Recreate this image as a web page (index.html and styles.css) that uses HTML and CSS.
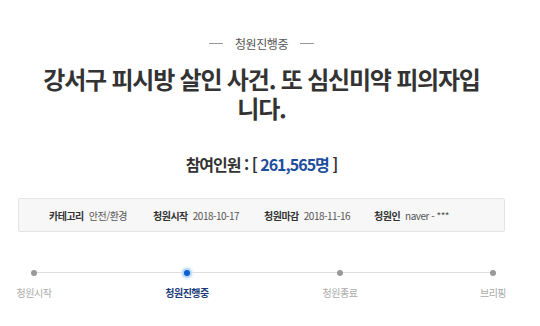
FILE: index.html
```html
<!DOCTYPE html>
<html lang="ko">
<head>
<meta charset="utf-8">
<link rel="stylesheet" href="styles.css">
</head>
<body>
<div class="page">
  <div class="status"><span class="rule"></span><span class="status-text">청원진행중</span><span class="rule"></span></div>
  <h1 class="title">강서구 피시방 살인 사건. 또 심신미약 피의자입니다.</h1>
  <p class="count">참여인원 : [ <span class="num">261,565명</span> ]</p>
  <div class="info">
    <div class="item item-cat"><b>카테고리</b><span>안전/환경</span></div>
    <div class="item item-start"><b>청원시작</b><span>2018-10-17</span></div>
    <div class="item item-end"><b>청원마감</b><span>2018-11-16</span></div>
    <div class="item"><b>청원인</b><span>naver - ***</span></div>
  </div>
  <div class="track">
    <div class="step"><i class="dot"></i><span class="label">청원시작</span></div>
    <div class="step active"><i class="dot"></i><span class="label">청원진행중</span></div>
    <div class="step"><i class="dot"></i><span class="label">청원종료</span></div>
    <div class="step"><i class="dot"></i><span class="label">브리핑</span></div>
  </div>
</div>
</body>
</html>
```
FILE: styles.css
```css
* { box-sizing: border-box; }
html, body { margin: 0; padding: 0; background: #fff; }
body {
  font-family: "Noto Sans CJK KR", "Noto Sans", sans-serif;
  color: #333;
  width: 540px;
  height: 326px;
  overflow: hidden;
}
.page { width: 523px; padding-top: 33px; }
.status {
  display: flex;
  justify-content: center;
  align-items: center;
  gap: 12px;
  height: 20px;
}
.rule { width: 14px; height: 1px; background: #999; }
.status-text { font-size: 12px; color: #555; letter-spacing: -0.4px; }
.title {
  margin: 11px 40px 0;
  text-align: center;
  font-size: 24px;
  line-height: 29px;
  font-weight: 700;
  letter-spacing: -1.2px;
  color: #333;
}
.count {
  margin: 31px 0 0;
  text-align: center;
  font-size: 16px;
  line-height: 22px;
  font-weight: 700;
  letter-spacing: -1px;
  color: #333;
}
.num { color: #1e4e9c; }
.info {
  margin: 23px 18px 0 18px;
  height: 34px;
  background: #f7f7f7;
  border: 1px solid #e4e4e4;
  border-radius: 2px;
  display: flex;
  align-items: center;
  padding-left: 30px;
  font-size: 10px;
  letter-spacing: -0.5px;
  color: #555;
}
.item { display: flex; gap: 5px; align-items: center; }
.item b { color: #333; font-weight: 700; }
.item-cat { width: 104px; }
.item-start { width: 111px; }
.item-end { width: 110px; }
.track {
  margin: 37px 30px 0 34px;
  display: flex;
  justify-content: space-between;
  background: linear-gradient(#dedede, #dedede) 0 3px / 100% 1px no-repeat;
}
.step {
  width: 0;
  display: flex;
  flex-direction: column;
  align-items: center;
}
.dot {
  display: block;
  width: 6px;
  height: 6px;
  border-radius: 50%;
  background: #999;
  margin-top: 1px;
}
.active .dot {
  background: #0a5fd0;
  box-shadow: 0 0 0 2px #bcd8f7, 0 0 3px 3px #dcebfb;
}
.label {
  margin-top: 10px;
  font-size: 10px;
  line-height: 14px;
  color: #aaa;
  white-space: nowrap;
  letter-spacing: -0.5px;
}
.active .label { color: #1d3e78; font-weight: 700; }
```
